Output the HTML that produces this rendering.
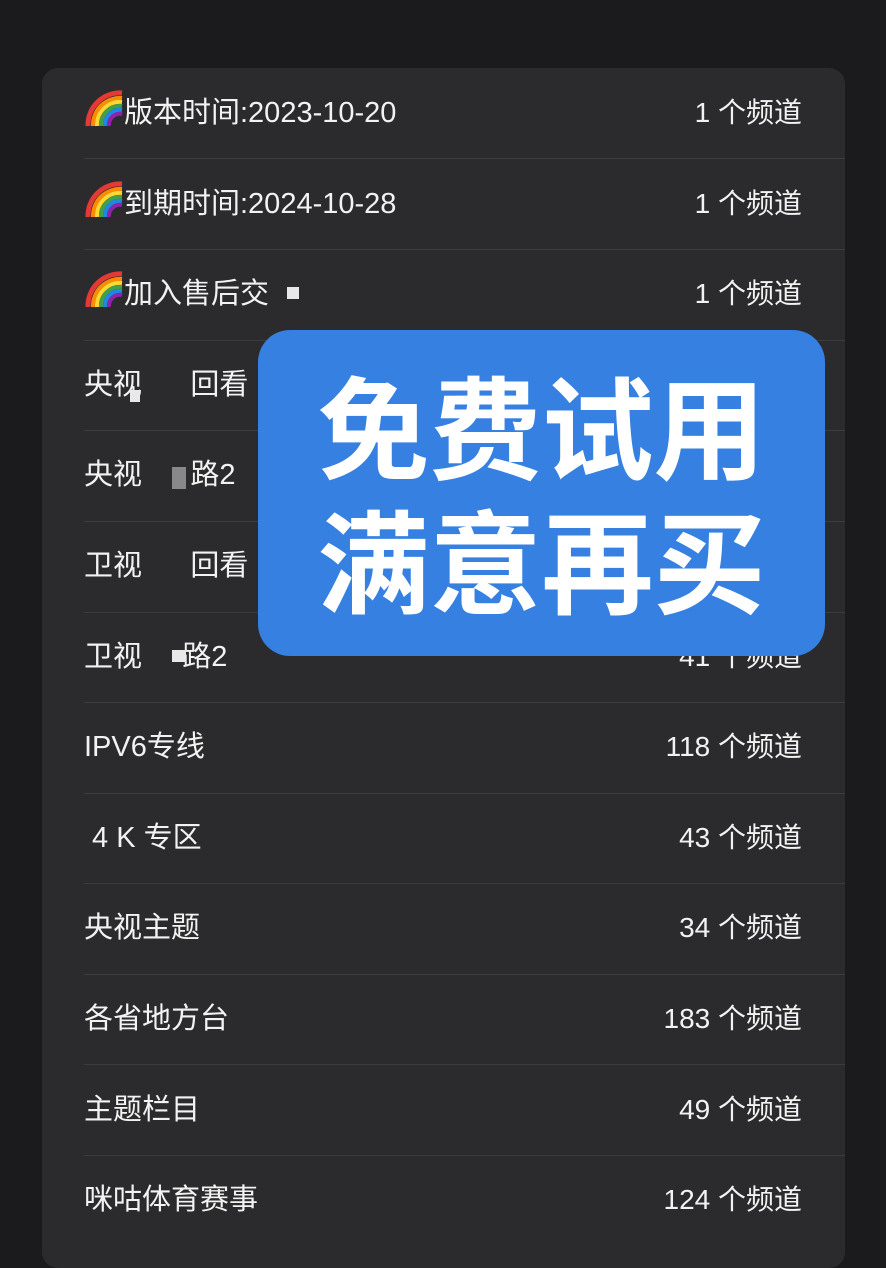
<!DOCTYPE html>
<html><head><meta charset="utf-8"><style>
html,body{margin:0;padding:0;}
body{width:886px;height:1241px;background:#1b1b1d;position:relative;overflow:hidden;font-family:"Liberation Sans","Noto Sans CJK SC",sans-serif;color:#f2f2f2;}
.card{position:absolute;left:42px;top:68px;width:803px;height:1200px;background:#2b2b2d;border-radius:16px;}
.row{position:absolute;left:84px;width:761px;height:90.6px;}
.row .l{position:absolute;left:0;top:0;line-height:90px;font-size:29px;white-space:nowrap;}
.row .r{position:absolute;right:43px;top:0;line-height:90px;font-size:28px;white-space:nowrap;}
.sep{position:absolute;left:84px;width:761px;height:1px;background:#3c3c3e;}
.rb{display:inline-block;width:40px;height:38px;vertical-align:-6px;}
.blue{position:absolute;left:258px;top:330px;width:567px;height:326px;background:#3580e0;border-radius:32px;color:#fff;font-weight:bold;font-family:"Noto Sans CJK SC",sans-serif;font-size:112px;line-height:134px;text-align:center;}
.blue div{position:absolute;left:0;width:567px;}
.blur{position:absolute;background:#e8e8e8;}
</style></head><body>
<div class="card"></div>
<svg width="0" height="0" style="position:absolute"><defs><g id="rain">
<path d="M4 36 A32 32 0 0 1 38 3" stroke="#e53935" stroke-width="5" fill="none"/>
<path d="M9 36 A27 27 0 0 1 38 8" stroke="#fb8c00" stroke-width="4" fill="none"/>
<path d="M13 36 A23 23 0 0 1 38 12" stroke="#fdd835" stroke-width="4" fill="none"/>
<path d="M17 36 A19 19 0 0 1 38 16" stroke="#43a047" stroke-width="4" fill="none"/>
<path d="M21 36 A15 15 0 0 1 38 20" stroke="#1e88e5" stroke-width="4" fill="none"/>
<path d="M25 36 A11 11 0 0 1 38 24" stroke="#8e24aa" stroke-width="4" fill="none"/>
</g></defs></svg>

<div class="row" style="top:68px"><span class="l"><svg class="rb" viewBox="0 0 40 38"><use href="#rain"/></svg>版本时间:2023-10-20</span><span class="r">1 个频道</span></div>
<div class="sep" style="top:158px"></div>
<div class="row" style="top:158.6px"><span class="l"><svg class="rb" viewBox="0 0 40 38"><use href="#rain"/></svg>到期时间:2024-10-28</span><span class="r">1 个频道</span></div>
<div class="sep" style="top:249px"></div>
<div class="row" style="top:249.2px"><span class="l"><svg class="rb" viewBox="0 0 40 38"><use href="#rain"/></svg>加入售后交</span><span class="r">1 个频道</span></div>
<div class="sep" style="top:340px"></div>
<div class="row" style="top:339.8px"><span class="l">央视&nbsp;&nbsp;&nbsp;&nbsp;&nbsp;&nbsp;回看</span></div>
<div class="sep" style="top:430px"></div>
<div class="row" style="top:430.4px"><span class="l">央视&nbsp;&nbsp;&nbsp;&nbsp;&nbsp;&nbsp;路2</span></div>
<div class="sep" style="top:521px"></div>
<div class="row" style="top:521px"><span class="l">卫视&nbsp;&nbsp;&nbsp;&nbsp;&nbsp;&nbsp;回看</span></div>
<div class="sep" style="top:612px"></div>
<div class="row" style="top:611.6px"><span class="l">卫视&nbsp;&nbsp;&nbsp;&nbsp;&nbsp;路2</span><span class="r">41 个频道</span></div>
<div class="sep" style="top:702px"></div>
<div class="row" style="top:702.2px"><span class="l">IPV6专线</span><span class="r">118 个频道</span></div>
<div class="sep" style="top:793px"></div>
<div class="row" style="top:792.8px"><span class="l">&nbsp;4 K 专区</span><span class="r">43 个频道</span></div>
<div class="sep" style="top:883px"></div>
<div class="row" style="top:883.4px"><span class="l">央视主题</span><span class="r">34 个频道</span></div>
<div class="sep" style="top:974px"></div>
<div class="row" style="top:974px"><span class="l">各省地方台</span><span class="r">183 个频道</span></div>
<div class="sep" style="top:1064px"></div>
<div class="row" style="top:1064.6px"><span class="l">主题栏目</span><span class="r">49 个频道</span></div>
<div class="sep" style="top:1155px"></div>
<div class="row" style="top:1155.2px"><span class="l">咪咕体育赛事</span><span class="r">124 个频道</span></div>

<div class="blur" style="left:287px;top:287px;width:12px;height:12px"></div>
<div class="blur" style="left:130px;top:390px;width:10px;height:12px"></div>
<div class="blur" style="left:172px;top:467px;width:14px;height:22px;background:#888"></div>
<div class="blur" style="left:172px;top:650px;width:14px;height:12px"></div>

<div class="blue">
<div style="top:26px">免费试用</div>
<div style="top:160px">满意再买</div>
</div>
</body></html>
